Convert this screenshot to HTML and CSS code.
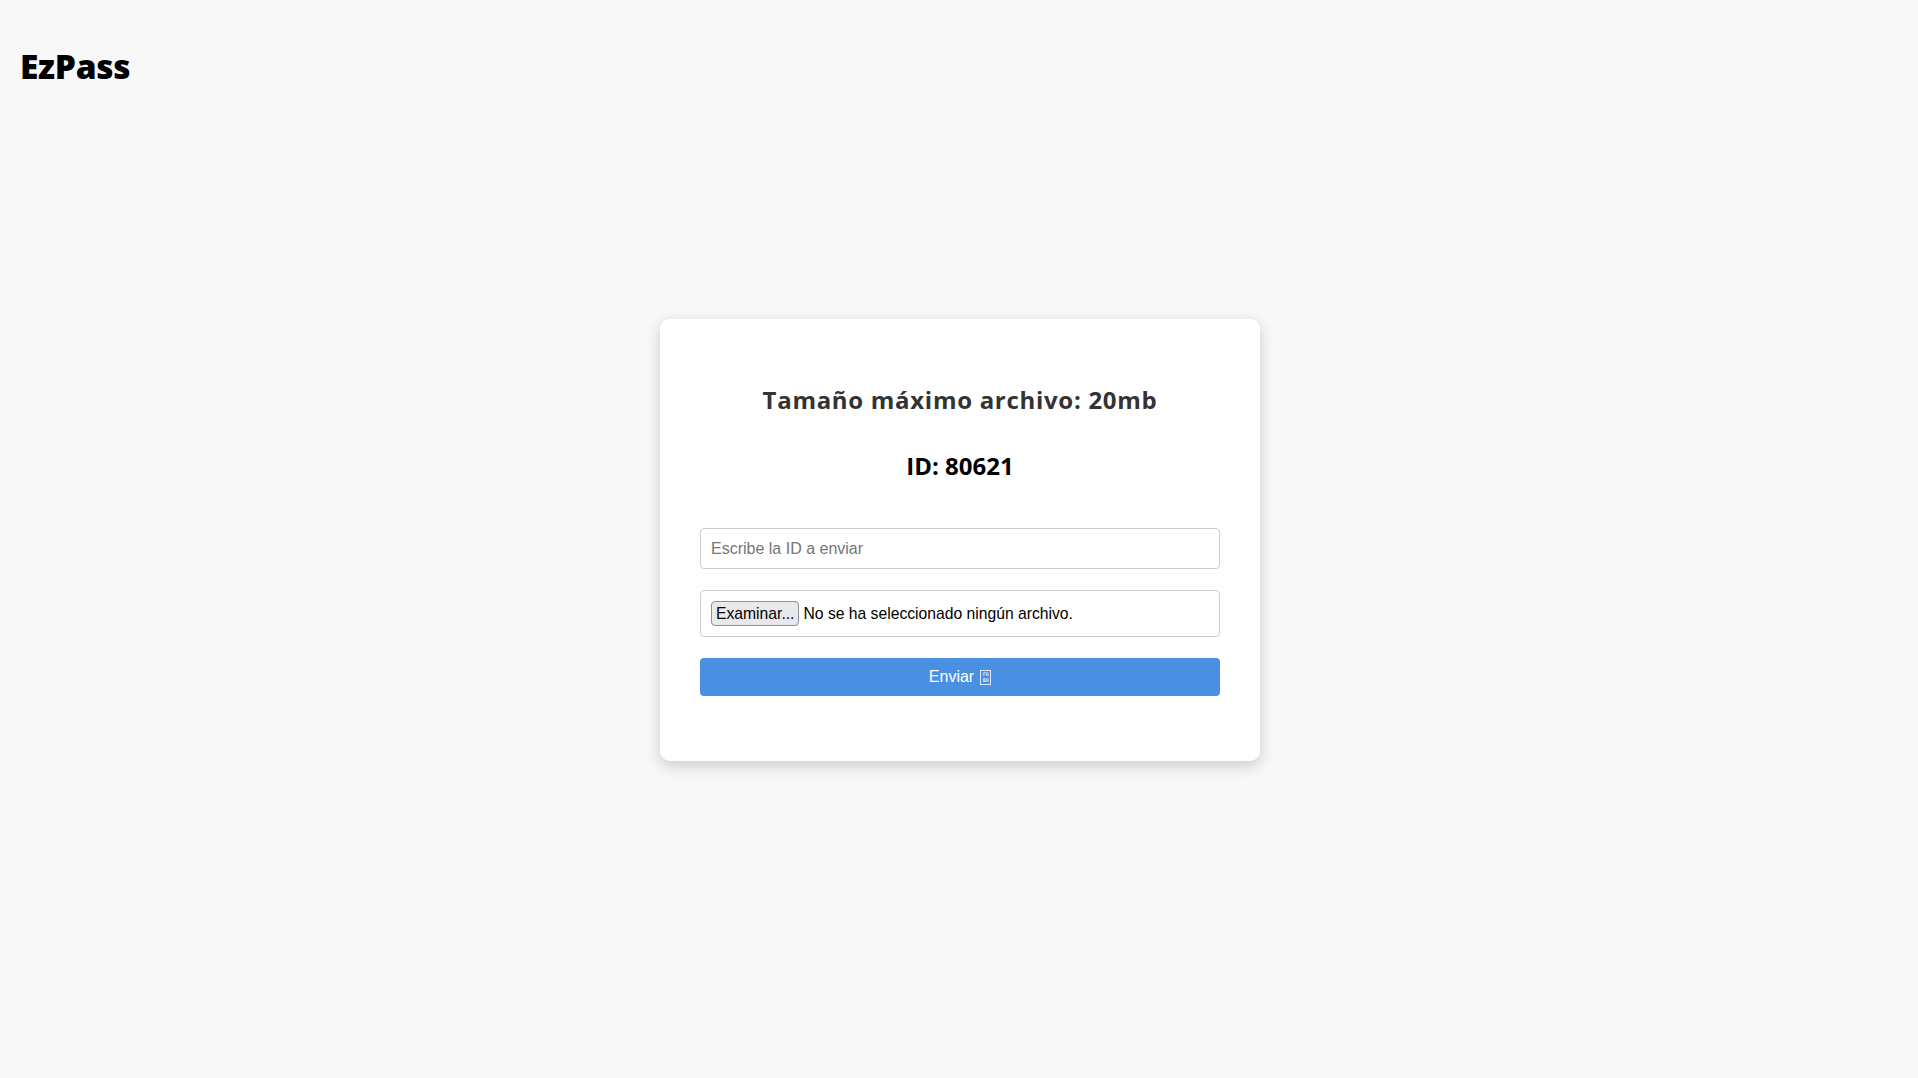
FILE: index.html
```html
<!DOCTYPE html>
<html lang="es">
<head>
<meta charset="utf-8">
<title>EzPass</title>
<link rel="stylesheet" href="styles.css">
</head>
<body>
<div class="page">
  <header class="header">
    <h1 class="logo">EzPass</h1>
  </header>
  <main class="main">
    <div class="card">
      <h2 class="title">Tamaño máximo archivo: 20mb</h2>
      <h3 class="id">ID: 80621</h3>
      <form class="form">
        <input class="text-input" type="text" placeholder="Escribe la ID a enviar">
        <label class="file-input">
          <span class="file-btn">Examinar...</span>
          <span class="file-text">No se ha seleccionado ningún archivo.</span>
        </label>
        <button class="submit" type="button">Enviar <span class="tofu"><span>F6</span><span>B0</span></span></button>
      </form>
    </div>
  </main>
</div>
</body>
</html>
```
FILE: styles.css
```css
* { box-sizing: border-box; }
html, body { margin: 0; padding: 0; }
body {
  background: #f8f8f8;
  font-family: "Open Sans", "Liberation Sans", sans-serif;
}
.page {
  display: grid;
  min-height: 100vh;
}
.header {
  grid-area: 1 / 1;
  align-self: start;
  padding: 44px 20px 0;
}
.logo {
  margin: 0;
  font-size: 33.5px;
  font-weight: 800;
  line-height: 44px;
  color: #000;
  letter-spacing: -0.3px;
}
.main {
  grid-area: 1 / 1;
  display: flex;
  align-items: center;
  justify-content: center;
  padding: 2px 0 0 2px;
}
.card {
  width: 600px;
  background: #fff;
  border-radius: 10px;
  box-shadow: 0 5px 15px rgba(0,0,0,0.18);
  padding: 63px 40px 65px;
  text-align: center;
}
.title {
  margin: 0;
  font-size: 24px;
  line-height: 36px;
  font-weight: 700;
  color: #333;
  letter-spacing: 0.7px;
}
.id {
  margin: 30px 0 0;
  font-size: 24px;
  line-height: 36px;
  font-weight: 700;
  color: #000;
}
.form {
  margin-top: 44px;
  display: flex;
  flex-direction: column;
  gap: 21px;
}
.text-input {
  height: 41px;
  border: 1px solid #ccc;
  border-radius: 4px;
  padding: 0 10px;
  font-family: "Liberation Sans", Arial, sans-serif;
  font-size: 16px;
  color: #000;
  background: #fff;
  outline: none;
}
.text-input::placeholder { color: #767676; }
.file-input {
  height: 47px;
  border: 1px solid #ccc;
  border-radius: 4px;
  padding: 0 10px;
  display: flex;
  align-items: center;
  gap: 4px;
  font-family: "Liberation Sans", Arial, sans-serif;
  font-size: 15.7px;
  color: #000;
  background: #fff;
  text-align: left;
}
.file-btn {
  display: inline-flex;
  align-items: center;
  height: 25px;
  padding: 0 4px;
  background: #e9e9ed;
  border: 1px solid #8f8f9d;
  border-radius: 4px;
  color: #000;
}
.submit {
  height: 38px;
  border: none;
  border-radius: 4px;
  background: #4a90e2;
  color: #fff;
  font-family: "Liberation Sans", Arial, sans-serif;
  font-size: 16px;
  display: flex;
  align-items: center;
  justify-content: center;
  gap: 6px;
  padding: 0;
}
.tofu {
  display: inline-flex;
  flex-direction: column;
  align-items: center;
  justify-content: center;
  width: 11px;
  height: 15px;
  border: 1px solid #dbe8f8;
  font-family: "DejaVu Sans Mono", monospace;
  font-size: 5px;
  line-height: 6px;
  color: #fff;
}
```
